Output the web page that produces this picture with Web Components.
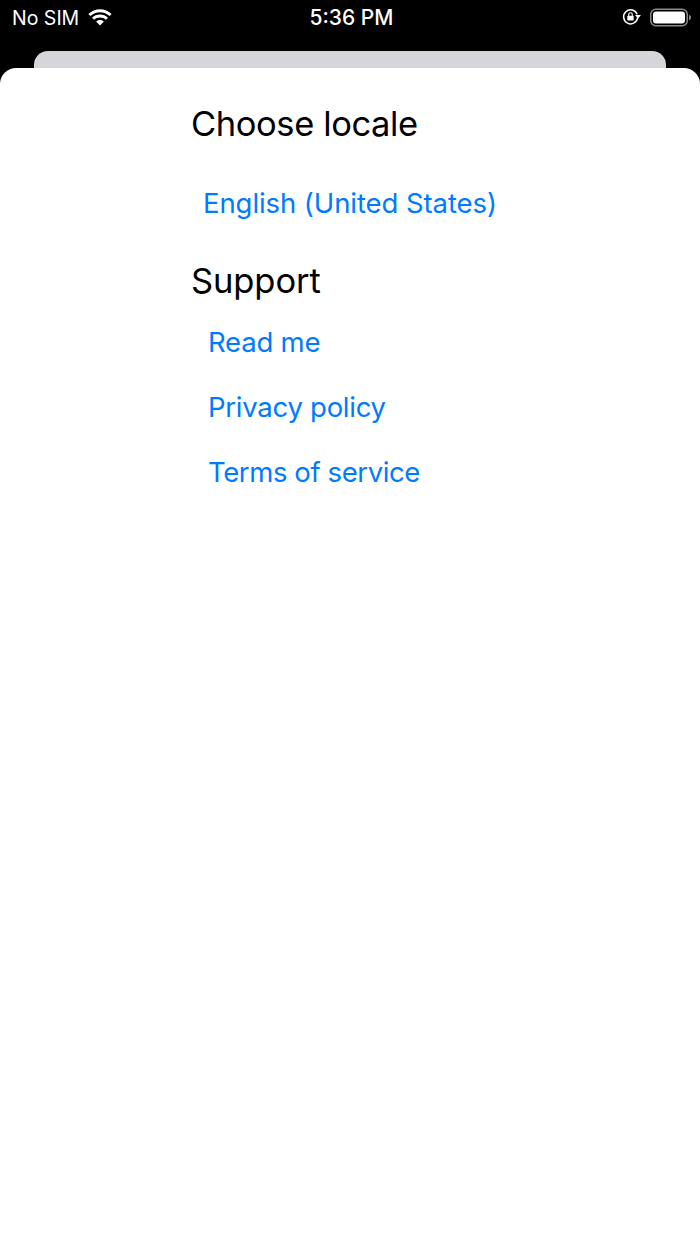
<!DOCTYPE html>
<html>
<head>
<meta charset="utf-8">
<title>Settings</title>
<style>
	html, body { margin: 0; height: 100%; background: #000; }
	body { font-family: Inter, "Liberation Sans", sans-serif; }
</style>
</head>
<body>
<template id="status-bar-template">
	<style>
		:host {
			display: grid;
			grid-template-columns: 1fr auto 1fr;
			align-items: center;
			height: 36px;
			padding: 0 9px 0 12px;
			color: #fff;
			font: 400 19.500px/36px Inter, "Liberation Sans", sans-serif;
		}
		.left, .right { display: flex; align-items: center; }
		.left { gap: 8px; }
		.right { justify-content: flex-end; gap: 8px; margin-top: -2px; }
		.time { font-weight: 500; font-size: 21px; }
		svg { display: block; }
	</style>
	<div class="left">
		<span>No SIM</span>
		<svg width="26" height="19" viewBox="0 0 26 19">
			<path d="M13 3.200c3.600 0 7 1.400 9.600 3.800l2-2.100C21.400 1.900 17.300 .2 13 .2S4.600 1.900 1.400 4.900l2 2.100C6 4.600 9.400 3.200 13 3.200z" fill="#fff"/>
			<path d="M13 8.500c2.200 0 4.300.8 5.900 2.300l2-2.100C18.800 6.700 16 5.600 13 5.600S7.200 6.700 5.100 8.700l2 2.100C8.700 9.300 10.800 8.500 13 8.500z" fill="#fff"/>
			<path d="M13 11c-1.500 0-2.900.6-3.900 1.500L13 16.600l3.900-4.100C15.900 11.600 14.500 11 13 11z" fill="#fff"/>
		</svg>
	</div>
	<span class="time">5:36 PM</span>
	<div class="right">
		<svg width="20" height="18" viewBox="0 0 20 18">
			<path d="M15.100 6.200A7 7 0 1 0 15.600 9.500" fill="none" stroke="#fff" stroke-width="1.500"/>
			<path d="M13 7h6l-3 3.500z" fill="#fff"/>
			<rect x="5.300" y="7.800" width="6.400" height="4.700" rx=".8" fill="#fff"/>
			<path d="M6.700 8V6.600a1.800 1.800 0 0 1 3.600 0V8" fill="none" stroke="#fff" stroke-width="1.100"/>
		</svg>
		<svg width="41" height="19" viewBox="0 0 41 19">
			<rect x=".75" y="1.250" width="36.500" height="16.500" rx="5" fill="none" stroke="#8b8b8b" stroke-width="1.500"/>
			<rect x="3" y="3.500" width="32" height="12" rx="3" fill="#fff"/>
			<path d="M39 6.800c1.200.4 2 1.500 2 2.700s-.8 2.300-2 2.700z" fill="#8b8b8b"/>
		</svg>
	</div>
</template>

<template id="page-sheet-template">
	<style>
		:host { display: block; flex: 1; position: relative; }
		.behind {
			height: 17px;
			margin: 15px 34px 0;
			background: #d6d5da;
			border-radius: 14px 14px 0 0;
		}
		.front {
			box-sizing: border-box;
			height: 1176px;
			background: #fff;
			border-radius: 16px 16px 0 0;
			padding: 32px 0 0 191px;
		}
	</style>
	<div class="behind"></div>
	<div class="front"><slot></slot></div>
</template>

<template id="section-title-template">
	<style>
		:host {
			display: block;
			color: #000;
			font: 400 34.500px/48px Inter, "Liberation Sans", sans-serif;
			letter-spacing: var(--tracking, -.4px);
		}
	</style>
	<slot></slot>
</template>

<template id="link-row-template">
	<style>
		:host {
			display: block;
			color: #007aff;
			font: 400 27.500px/65px Inter, "Liberation Sans", sans-serif;
			letter-spacing: var(--tracking, -.2px);
			padding-left: var(--indent, 17px);
		}
	</style>
	<slot></slot>
</template>

<script>
	const define_simple = (name) => {
		customElements.define(name, class extends HTMLElement {
			constructor() {
				super();
				this.attachShadow({ mode: 'open' });
				const template = document.getElementById(`${name}-template`);
				this.shadowRoot.appendChild(template.content.cloneNode(true));
			}
		});
	};

	['status-bar', 'page-sheet', 'section-title', 'link-row'].forEach(define_simple);
</script>

<status-bar></status-bar>
<page-sheet>
	<section-title>Choose locale</section-title>
	<link-row style="--indent: 12px; --tracking: -.08px; margin-top: 22px; line-height: 66px;">English (United States)</link-row>
	<section-title style="--tracking: -.1px; margin-top: 21px;">Support</section-title>
	<link-row style="margin-top: 5px;">Read me</link-row>
	<link-row style="--tracking: -.26px;">Privacy policy</link-row>
	<link-row style="--tracking: -.4px;">Terms of service</link-row>
</page-sheet>
</body>
</html>
